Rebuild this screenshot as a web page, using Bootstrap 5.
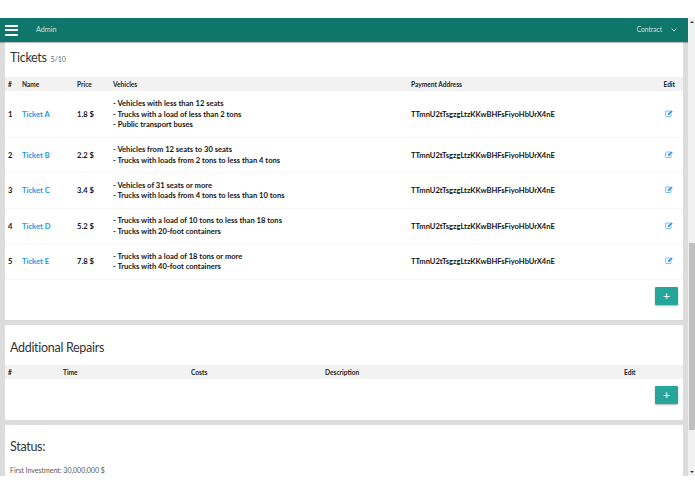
<!DOCTYPE html>
<html lang="en">
<head>
<meta charset="utf-8">
<title>Contract tickets</title>
<link href="https://cdn.jsdelivr.net/npm/bootstrap@5.3.0/dist/css/bootstrap.min.css" rel="stylesheet">
<style>
html,body{height:100%;overflow:hidden}
body{font-family:"Lato","Noto Sans",sans-serif;background:#fff;font-size:8px;color:#212121}
.app-frame{height:494px;padding:18px 0}
.app-view{height:458px;overflow:hidden}
.app-main{flex:1 1 auto;min-width:0;overflow:hidden}
.top-bar{height:24px;flex:0 0 24px;background:#0f766c;box-shadow:0 1px 1px rgba(0,0,0,.25);padding:0 11px 0 5px;position:relative}
.top-bar a{color:#c9e6e2;text-decoration:none;font-size:7.2px}
.top-bar a.contract-link{font-size:6.6px}
.burger{width:13px;height:11px;border-top:2px solid #fff;border-bottom:2px solid #fff;position:relative}
.burger::after{content:"";position:absolute;left:0;right:0;top:2.5px;height:2px;background:#fff}
.admin-link{margin-left:18px}
.sheet-list{background:#dcdcdc;padding:0 5px;height:434px;gap:5px}
.sheet{background:#fff;flex:0 0 auto}
.sheet-1{height:278px}
.sheet-2{height:95px}
.sheet-3{flex:1 1 auto;padding:12px 5px}
.sheet-title{font-size:12.5px;letter-spacing:-.3px;font-weight:400;color:#333;margin:0;line-height:20px}
.sheet-title small{font-size:7px;letter-spacing:0;color:#666;margin-left:1px}
.title-1{padding:6px 5px 0;height:35px}
.title-2{padding:13px 5px 0;height:40px}
.grid-tbl{table-layout:fixed;width:100%;margin:0;font-size:7.6px;font-weight:700;color:#151515}
.grid-tbl th,.grid-tbl td{padding:0 3px;vertical-align:middle;border-bottom:1px solid #f6f6f6;background:#fff;box-shadow:none;line-height:10.5px}
.grid-tbl thead th{background:#f2f2f2;height:14px;font-size:6.6px;border:0;color:#222}
.grid-tbl td a{color:#1a9ae4;text-decoration:none}
.row-a{height:46px}.row-b{height:35.5px}
.foot-bar{padding:7px 5px 0}
.add-btn{width:23px;height:18px;padding:0;background:#26a69a;border:0;border-radius:1px;color:#fff;font-size:12px;line-height:18px;box-shadow:0 1px 2px rgba(0,0,0,.3)}
.add-btn:hover{background:#26a69a;color:#fff}
.edit-cell{text-align:right;padding-right:10px!important}
.grid-tbl thead th.edit-cell{padding-right:8px!important}
.edit-icon{display:inline-block;vertical-align:baseline}
.stat-line{font-size:7px;color:#555;margin:8px 0 0}
.scroll-track{width:7px;flex:0 0 7px;background:#f0f0f0;position:relative}
.scroll-thumb{position:absolute;left:1px;right:0;top:225px;height:187px;background:#c0c0c0}
.scroll-up,.scroll-down{position:absolute;left:2px;width:0;height:0;border-left:2px solid transparent;border-right:2px solid transparent}
.scroll-up{top:3px;border-bottom:2px solid #333}
.scroll-down{bottom:3px;border-top:2px solid #333}
.chev{margin-left:9px}
</style>
</head>
<body>
<div class="app-frame">
<div class="app-view d-flex">
  <div class="app-main d-flex flex-column">
    <nav class="top-bar d-flex align-items-center justify-content-between">
      <div class="d-flex align-items-center">
        <div class="burger"></div>
        <a href="#" class="admin-link">Admin</a>
      </div>
      <a href="#" class="contract-link d-flex align-items-center">Contract
        <svg class="chev" width="6" height="4" viewBox="0 0 6 4"><path d="M.6.7 3 3 5.4.7" fill="none" stroke="#d5ece9" stroke-width="1"/></svg>
      </a>
    </nav>
    <div class="sheet-list d-flex flex-column">
      <section class="sheet sheet-1">
        <div class="title-1"><h2 class="sheet-title">Tickets <small>5/10</small></h2></div>
        <table class="table grid-tbl">
          <colgroup><col style="width:14px"><col style="width:55px"><col style="width:36px"><col style="width:298px"><col><col style="width:50px"></colgroup>
          <thead><tr><th>#</th><th>Name</th><th>Price</th><th>Vehicles</th><th>Payment Address</th><th class="edit-cell">Edit</th></tr></thead>
          <tbody>
            <tr class="row-a"><td>1</td><td><a href="#">Ticket A</a></td><td>1.8 $</td><td>- Vehicles with less than 12 seats<br>- Trucks with a load of less than 2 tons<br>- Public transport buses</td><td>TTmnU2tTsgzgLtzKKwBHFsFiyoHbUrX4nE</td><td class="edit-cell"><svg class="edit-icon" width="8" height="7" viewBox="0 0 8 7"><path d="M5.5 1H1.2a.6.6 0 0 0-.6.6v4.3a.6.6 0 0 0 .6.6h4.3a.6.6 0 0 0 .6-.6V4" fill="none" stroke="#54b0ea" stroke-width=".8"/><path d="M3 3.4 6.4.4 7.7 1.6 4.6 4.8 2.8 5z" fill="#2f97dd"/></svg></td></tr>
            <tr class="row-b"><td>2</td><td><a href="#">Ticket B</a></td><td>2.2 $</td><td>- Vehicles from 12 seats to 30 seats<br>- Trucks with loads from 2 tons to less than 4 tons</td><td>TTmnU2tTsgzgLtzKKwBHFsFiyoHbUrX4nE</td><td class="edit-cell"><svg class="edit-icon" width="8" height="7" viewBox="0 0 8 7"><path d="M5.5 1H1.2a.6.6 0 0 0-.6.6v4.3a.6.6 0 0 0 .6.6h4.3a.6.6 0 0 0 .6-.6V4" fill="none" stroke="#54b0ea" stroke-width=".8"/><path d="M3 3.4 6.4.4 7.7 1.6 4.6 4.8 2.8 5z" fill="#2f97dd"/></svg></td></tr>
            <tr class="row-b"><td>3</td><td><a href="#">Ticket C</a></td><td>3.4 $</td><td>- Vehicles of 31 seats or more<br>- Trucks with loads from 4 tons to less than 10 tons</td><td>TTmnU2tTsgzgLtzKKwBHFsFiyoHbUrX4nE</td><td class="edit-cell"><svg class="edit-icon" width="8" height="7" viewBox="0 0 8 7"><path d="M5.5 1H1.2a.6.6 0 0 0-.6.6v4.3a.6.6 0 0 0 .6.6h4.3a.6.6 0 0 0 .6-.6V4" fill="none" stroke="#54b0ea" stroke-width=".8"/><path d="M3 3.4 6.4.4 7.7 1.6 4.6 4.8 2.8 5z" fill="#2f97dd"/></svg></td></tr>
            <tr class="row-b"><td>4</td><td><a href="#">Ticket D</a></td><td>5.2 $</td><td>- Trucks with a load of 10 tons to less than 18 tons<br>- Trucks with 20-foot containers</td><td>TTmnU2tTsgzgLtzKKwBHFsFiyoHbUrX4nE</td><td class="edit-cell"><svg class="edit-icon" width="8" height="7" viewBox="0 0 8 7"><path d="M5.5 1H1.2a.6.6 0 0 0-.6.6v4.3a.6.6 0 0 0 .6.6h4.3a.6.6 0 0 0 .6-.6V4" fill="none" stroke="#54b0ea" stroke-width=".8"/><path d="M3 3.4 6.4.4 7.7 1.6 4.6 4.8 2.8 5z" fill="#2f97dd"/></svg></td></tr>
            <tr class="row-b"><td>5</td><td><a href="#">Ticket E</a></td><td>7.8 $</td><td>- Trucks with a load of 18 tons or more<br>- Trucks with 40-foot containers</td><td>TTmnU2tTsgzgLtzKKwBHFsFiyoHbUrX4nE</td><td class="edit-cell"><svg class="edit-icon" width="8" height="7" viewBox="0 0 8 7"><path d="M5.5 1H1.2a.6.6 0 0 0-.6.6v4.3a.6.6 0 0 0 .6.6h4.3a.6.6 0 0 0 .6-.6V4" fill="none" stroke="#54b0ea" stroke-width=".8"/><path d="M3 3.4 6.4.4 7.7 1.6 4.6 4.8 2.8 5z" fill="#2f97dd"/></svg></td></tr>
          </tbody>
        </table>
        <div class="foot-bar d-flex justify-content-end"><button type="button" class="btn add-btn">+</button></div>
      </section>
      <section class="sheet sheet-2">
        <div class="title-2"><h2 class="sheet-title">Additional Repairs</h2></div>
        <table class="table grid-tbl">
          <colgroup><col style="width:55px"><col style="width:128px"><col style="width:134px"><col style="width:299px"><col></colgroup>
          <thead><tr><th>#</th><th>Time</th><th>Costs</th><th>Description</th><th>Edit</th></tr></thead>
        </table>
        <div class="foot-bar d-flex justify-content-end"><button type="button" class="btn add-btn">+</button></div>
      </section>
      <section class="sheet sheet-3">
        <h2 class="sheet-title">Status:</h2>
        <p class="stat-line">First Investment: 30,000,000 $</p>
      </section>
    </div>
  </div>
  <div class="scroll-track"><span class="scroll-up"></span><span class="scroll-thumb"></span><span class="scroll-down"></span></div>
</div>
</div>
<script src="https://cdn.jsdelivr.net/npm/bootstrap@5.3.0/dist/js/bootstrap.bundle.min.js"></script>
</body>
</html>
